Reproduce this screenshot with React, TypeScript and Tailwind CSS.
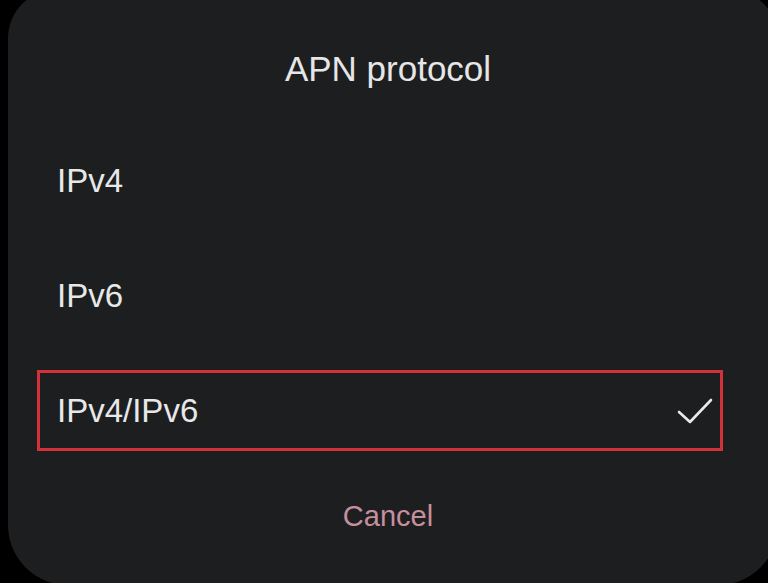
const OPTIONS = ["IPv4", "IPv6", "IPv4/IPv6"];
const SELECTED = "IPv4/IPv6";

function Check() {
  return (
    <svg width="38" height="28" viewBox="0 0 38 28" fill="none" className="shrink-0">
      <polyline
        points="3,15 14,25 35,3"
        stroke="#e9e9e9"
        strokeWidth="2.6"
        strokeLinecap="round"
        strokeLinejoin="round"
      />
    </svg>
  );
}

export default function App() {
  return (
    <div className="h-[583px] w-full overflow-hidden bg-black font-['Liberation_Sans',Arial,sans-serif]">
      <div className="ml-[8px] mt-[-10px] h-[595px] w-[770px] rounded-t-[48px] rounded-b-[60px] bg-[#1d1e20]">
        <div className="w-[760px] pt-[59px]">
          <h1 className="text-center text-[35px] leading-[40px] text-[#e6e6e6]">APN protocol</h1>

          <div className="ml-[29px] mt-[51px] flex w-[686px] flex-col gap-[34px]">
            {OPTIONS.map((o) => {
              const sel = o === SELECTED;
              return (
                <div
                  key={o}
                  className={
                    sel
                      ? "flex h-[81px] items-center justify-between border-[3px] border-[#d3303b] pl-[17px] pr-[6px]"
                      : "flex h-[81px] items-center justify-between border-[3px] border-transparent pl-[17px] pr-[6px]"
                  }
                >
                  <span className="text-[33px] leading-[40px] text-[#e8e8e8]">{o}</span>
                  {sel && <Check />}
                </div>
              );
            })}
          </div>

          <div className="mt-[47px] text-center text-[29px] leading-[36px] text-[#c68f9e]">Cancel</div>
        </div>
      </div>
    </div>
  );
}
